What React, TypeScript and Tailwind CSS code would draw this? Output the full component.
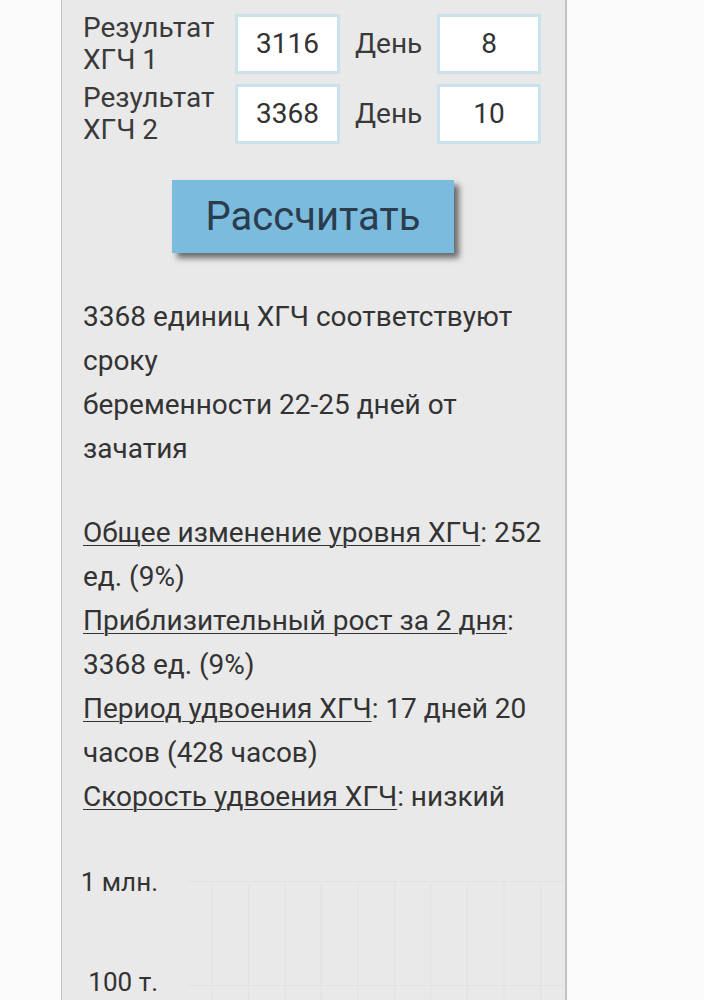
import React from 'react';

const rows = [
  { label: 'ХГЧ 1', value: '3116', day: '8' },
  { label: 'ХГЧ 2', value: '3368', day: '10' },
];

const stats = [
  { term: 'Общее изменение уровня ХГЧ', value: ': 252 ед. (9%)' },
  { term: 'Приблизительный рост за 2 дня', value: ': 3368 ед. (9%)' },
  { term: 'Период удвоения ХГЧ', value: ': 17 дней 20 часов (428 часов)' },
  { term: 'Скорость удвоения ХГЧ', value: ': низкий' },
];

function Grid() {
  const xs = Array.from({ length: 11 }, (_, i) => 24 + i * 36.5);
  return (
    <svg width="378" height="130" className="block">
      <line x1="0" y1="0.5" x2="378" y2="0.5" stroke="#e2e2e2" strokeWidth="1" />
      <line x1="0" y1="104.5" x2="378" y2="104.5" stroke="#e2e2e2" strokeWidth="1" />
      {xs.map((x) => (
        <line key={x} x1={x} y1="0" x2={x} y2="130" stroke="#e3e3e3" strokeWidth="1.5" />
      ))}
    </svg>
  );
}

export default function App() {
  return (
    <div className="min-h-screen bg-[#fafafa] font-['Roboto',sans-serif] text-[#333]">
      <div className="ml-[61px] h-[1000px] w-[506px] overflow-hidden border-l border-r-2 border-[#c2c2c2] bg-[#e9e9e9] pl-[21px] pr-[20px] pt-[14px]">
        <div className="flex flex-col gap-[10px]">
          {rows.map((r) => (
            <div key={r.label} className="flex h-[60px] items-center">
              <div className="w-[152px] text-[28px] leading-[32px] text-[#3a3a3a]">
                Результат
                <br />
                {r.label}
              </div>
              <div className="flex h-[60px] w-[105px] items-center justify-center border-[3px] border-[#cbe2ec] bg-white text-[28px] text-[#333]">
                {r.value}
              </div>
              <div className="w-[97px] pl-[15px] text-[28px] text-[#3a3a3a]">День</div>
              <div className="flex h-[60px] w-[104px] items-center justify-center border-[3px] border-[#cbe2ec] bg-white text-[28px] text-[#333]">
                {r.day}
              </div>
            </div>
          ))}
        </div>

        <div className="mt-[36px] flex justify-center pr-[2px]">
          <button className="h-[73px] w-[282px] bg-[#7bbbde] text-[40px] text-[#2b3d4d] shadow-[5px_5px_6px_rgba(0,0,0,0.55)]">
            Рассчитать
          </button>
        </div>

        <div className="mt-[42px] text-[28px] leading-[44px]">
          3368 единиц ХГЧ соответствуют сроку
          <br />
          беременности 22-25 дней от зачатия
        </div>

        <div className="mt-[40px] text-[28px] leading-[44px]">
          {stats.map((s) => (
            <div key={s.term}>
              <span className="underline decoration-1 underline-offset-[3px]">{s.term}</span>
              {s.value}
            </div>
          ))}
        </div>

        <div className="mt-[48px] flex">
          <div className="flex w-[75px] shrink-0 flex-col items-end whitespace-nowrap text-[26px]">
            <div className="leading-[30px]">1 млн.</div>
            <div className="mt-[70px] leading-[30px]">100 т.</div>
          </div>
          <div className="ml-[30px] mt-[14px]">
            <Grid />
          </div>
        </div>
      </div>
    </div>
  );
}
